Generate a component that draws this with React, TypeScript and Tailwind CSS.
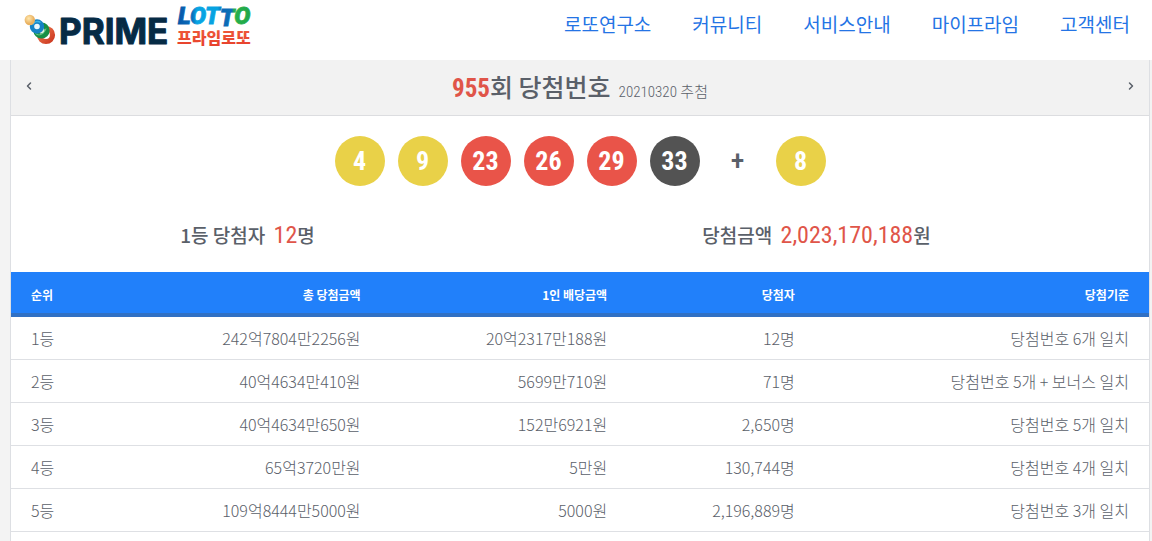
import { clsx } from "clsx";
import { ChevronLeft, ChevronRight } from "lucide-react";

interface PrizeRow {
  rank: string;
  total: string;
  each: string;
  winners: string;
  rule: string;
}

const menus = ["로또연구소", "커뮤니티", "서비스안내", "마이프라임", "고객센터"];

const numbers = [4, 9, 23, 26, 29, 33];
const bonus = 8;

const rows: PrizeRow[] = [
  { rank: "1등", total: "242억7804만2256원", each: "20억2317만188원", winners: "12명", rule: "당첨번호 6개 일치" },
  { rank: "2등", total: "40억4634만410원", each: "5699만710원", winners: "71명", rule: "당첨번호 5개 + 보너스 일치" },
  { rank: "3등", total: "40억4634만650원", each: "152만6921원", winners: "2,650명", rule: "당첨번호 5개 일치" },
  { rank: "4등", total: "65억3720만원", each: "5만원", winners: "130,744명", rule: "당첨번호 4개 일치" },
  { rank: "5등", total: "109억8444만5000원", each: "5000원", winners: "2,196,889명", rule: "당첨번호 3개 일치" },
];

// Ball colors follow the official number ranges
function ballColor(n: number) {
  if (n <= 10) return "bg-[#e9d148]";
  if (n <= 20) return "bg-[#2180fa]";
  if (n <= 30) return "bg-[#e95449]";
  if (n <= 40) return "bg-[#535353]";
  return "bg-[#5bb85d]";
}

function Ball({ n }: { n: number }) {
  return (
    <span
      className={clsx(
        "flex size-[50px] items-center justify-center rounded-full font-['Roboto_Condensed',Roboto,sans-serif] text-[26px] font-bold text-white",
        ballColor(n)
      )}
    >
      {n}
    </span>
  );
}

function Logo() {
  return (
    <svg viewBox="0 0 234 54" className="h-[54px] w-[234px]" role="img" aria-label="PRIME LOTTO 프라임로또">
      <defs>
        <linearGradient id="lotto" x1="0" x2="1">
          <stop offset="0" stopColor="#0757a8" />
          <stop offset="0.2" stopColor="#0870bd" />
          <stop offset="0.26" stopColor="#08a5e4" />
          <stop offset="0.55" stopColor="#07a2e0" />
          <stop offset="0.62" stopColor="#0b68b5" />
          <stop offset="0.74" stopColor="#0c70b8" />
          <stop offset="0.78" stopColor="#27b14c" />
          <stop offset="1" stopColor="#1fa64a" />
        </linearGradient>
        <linearGradient id="korean" x1="0" x2="0" y1="0" y2="1">
          <stop offset="0" stopColor="#f0603e" />
          <stop offset="1" stopColor="#e63c29" />
        </linearGradient>
        <linearGradient id="red" x1="0" x2="1" y1="0" y2="1">
          <stop offset="0" stopColor="#ef7a50" />
          <stop offset="1" stopColor="#cd3a22" />
        </linearGradient>
        <radialGradient id="gold" cx="0.4" cy="0.35">
          <stop offset="0" stopColor="#ffe7ae" />
          <stop offset="1" stopColor="#e9b160" />
        </radialGradient>
      </defs>
      {/* stacked rings, back to front */}
      <circle cx="24" cy="35" r="6.5" fill="#fff" stroke="url(#red)" strokeWidth="5.2" />
      <circle cx="19.5" cy="30.5" r="5.6" fill="#d9f1df" stroke="#178f45" strokeWidth="5" />
      <path d="M13.5 33.5c3 3 9 1 10.500-5" fill="none" stroke="#6cc987" strokeWidth="1" />
      <circle cx="15" cy="26.500" r="5" fill="#e9f7fd" stroke="#1582c4" strokeWidth="4.4" />
      <path d="M11 24.500c1-3 5-4 7.500-2" fill="none" stroke="#38b4e8" strokeWidth="1.500" />
      <circle cx="7.8" cy="20" r="5.2" fill="url(#gold)" />
      <text x="37" y="44" fontSize="35" strokeWidth="1" strokeLinejoin="round" className="fill-[#062b45] stroke-[#062b45] font-[Inter,sans-serif] font-bold">
        PRIME
      </text>
      <text x="156" y="24" dy="0 0 0 2 -2" fontSize="24" fill="url(#lotto)" stroke="url(#lotto)" strokeWidth="0.8" className="font-[Roboto,sans-serif] font-black italic">
        LOTTO
      </text>
      <text x="155" y="44" fontSize="16" fill="url(#korean)" className="font-['Noto_Sans_CJK_KR',sans-serif] font-black">
        프라임로또
      </text>
    </svg>
  );
}

export default function App() {
  return (
    <div className="min-h-screen bg-[#f3f3f3] font-['Noto_Sans_CJK_KR',sans-serif] text-[#5a6069]">
      <header className="flex h-15 items-start justify-between bg-white px-[22px]">
        <a href="#">
          <Logo />
        </a>
        <nav className="flex gap-[41px] pt-3">
          {menus.map((menu) => (
            <a key={menu} href="#" className="text-[19px] leading-6 text-[#2474e5]">
              {menu}
            </a>
          ))}
        </nav>
      </header>

      <main className="ml-[10px] mr-[2px] border-x border-[#dddfe3] bg-white">
        <div className="flex h-14 items-center justify-between border-b border-[#dcdde0] bg-[#f2f2f2] px-3">
          <button type="button" aria-label="이전 회차" className="pb-1">
            <ChevronLeft size={12} strokeWidth={3} />
          </button>
          <h1 className="flex items-baseline text-[25px] font-medium">
            <span className="font-['Roboto_Condensed',Roboto,sans-serif] font-bold text-[#e05549]">955</span>
            회 당첨번호
            <small className="ml-2 font-['Roboto_Condensed','Noto_Sans_CJK_KR',sans-serif] text-[15px] font-light">
              20210320 추첨
            </small>
          </h1>
          <button type="button" aria-label="다음 회차" className="pb-1">
            <ChevronRight size={12} strokeWidth={3} />
          </button>
        </div>

        <div className="flex justify-center gap-[13px] pt-5">
          {numbers.map((n) => (
            <Ball key={n} n={n} />
          ))}
          <span className="flex size-[50px] items-center justify-center font-['Roboto_Condensed',Roboto,sans-serif] text-[28px] font-medium">
            +
          </span>
          <Ball n={bonus} />
        </div>

        <div className="flex h-[86px] items-center pt-3 text-[19px] font-medium">
          <p className="flex-1 pr-24 text-center">
            1등 당첨자{" "}
            <span className="ml-1 font-['Roboto_Condensed',Roboto,sans-serif] text-2xl font-normal text-[#e05549]">
              12
            </span>
            명
          </p>
          <p className="flex-1 pr-24 text-center">
            당첨금액{" "}
            <span className="ml-1 font-['Roboto_Condensed',Roboto,sans-serif] text-2xl font-normal text-[#e05549]">
              2,023,170,188
            </span>
            원
          </p>
        </div>

        <table className="w-full border-separate border-spacing-0 text-right">
          <thead className="bg-[#2180fa] text-xs text-white">
            <tr className="h-[45px] *:border-b-4 *:border-[#3070c4] *:px-5 *:pt-1 *:font-bold">
              <th className="text-left">순위</th>
              <th>총 당첨금액</th>
              <th>1인 배당금액</th>
              <th>당첨자</th>
              <th>당첨기준</th>
            </tr>
          </thead>
          <tbody className="text-base font-light">
            {rows.map((row) => (
              <tr key={row.rank} className="h-[43px] *:border-b *:border-[#dee0e4] *:px-5">
                <td className="text-left">{row.rank}</td>
                <td>{row.total}</td>
                <td>{row.each}</td>
                <td>{row.winners}</td>
                <td>{row.rule}</td>
              </tr>
            ))}
          </tbody>
        </table>
        <div className="h-[9px]" />
      </main>
    </div>
  );
}
